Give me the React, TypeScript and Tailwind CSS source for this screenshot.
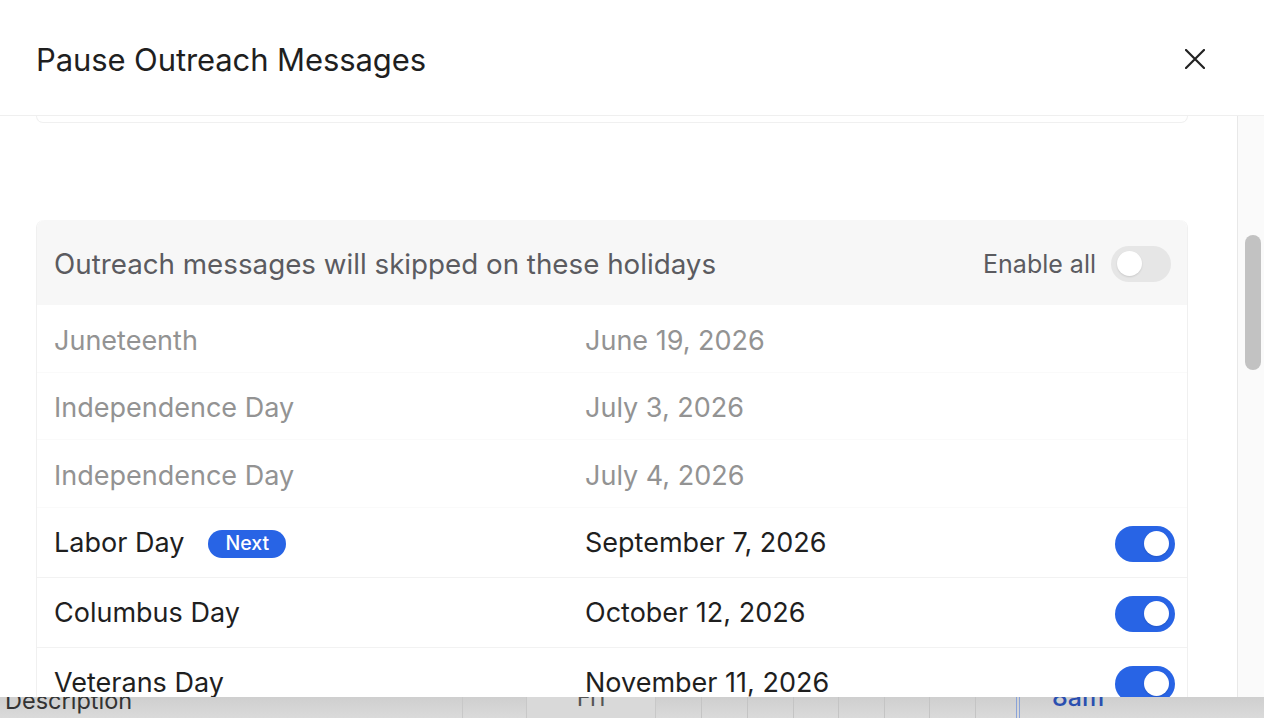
type Holiday = { name: string; date: string; enabled: boolean; next?: boolean };

const holidays: Holiday[] = [
  { name: "Juneteenth", date: "June 19, 2026", enabled: false },
  { name: "Independence Day", date: "July 3, 2026", enabled: false },
  { name: "Independence Day", date: "July 4, 2026", enabled: false },
  { name: "Labor Day", date: "September 7, 2026", enabled: true, next: true },
  { name: "Columbus Day", date: "October 12, 2026", enabled: true },
  { name: "Veterans Day", date: "November 11, 2026", enabled: true },
];

function Toggle({ on }: { on: boolean }) {
  return (
    <div
      className={
        on
          ? "flex h-[36px] w-[60px] items-center justify-end rounded-full bg-[#2864e5] px-[6px]"
          : "flex h-[36px] w-[60px] items-center justify-start rounded-full bg-[#e6e6e6] px-[6px]"
      }
    >
      <div className="h-[25px] w-[25px] rounded-full bg-white shadow-[0_1px_2px_rgba(0,0,0,0.12)]" />
    </div>
  );
}

export default function App() {
  return (
    <div
      className="flex h-[718px] w-[1264px] flex-col overflow-hidden bg-white"
      style={{ fontFamily: "Inter, 'Noto Sans', sans-serif" }}
    >
      {/* Header */}
      <div className="flex h-[116px] shrink-0 items-center justify-between border-b border-[#efefef] pl-[36px] pr-[59px]">
        <h1 className="pt-[5px] text-[31px] font-normal tracking-[-0.1px] text-[#1f1f1f]">Pause Outreach Messages</h1>
        <svg width="20" height="20" viewBox="0 0 20 20" className="mt-[2px]">
          <path d="M1 1L19 19M19 1L1 19" stroke="#222" strokeWidth="2.2" strokeLinecap="round" />
        </svg>
      </div>

      {/* Body */}
      <div className="flex min-h-0 flex-1">
        <div className="min-w-0 flex-1 overflow-hidden">
          {/* tail of the previous card */}
          <div className="ml-[36px] mr-[49px] h-[7px] rounded-b-lg border-x border-b border-[#f0f0f0]" />

          {/* Holidays card */}
          <div className="ml-[36px] mr-[49px] mt-[97px] rounded-t-lg border-x border-[#f0f0f0]">
            <div className="flex h-[85px] items-center justify-between rounded-t-lg bg-[#f7f7f7] pl-[17px] pr-[16px] pt-[2px]">
              <span className="pt-[2px] text-[27.75px] text-[#5b5b60]">Outreach messages will skipped on these holidays</span>
              <div className="flex items-center gap-[15px]">
                <span className="pt-[2px] text-[25px] text-[#5b5b60]">Enable all</span>
                <Toggle on={false} />
              </div>
            </div>

            {holidays.map((h, i) => (
              <div
                key={i}
                className={
                  h.enabled
                    ? "grid h-[70px] grid-cols-[531px_1fr_auto] items-center border-b border-[#f2f2f2] pl-[17px] pr-[12px] pt-[3px]"
                    : "grid h-[67.5px] grid-cols-[531px_1fr_auto] items-center border-b border-[#fafafa] pl-[17px] pr-[12px] pt-[5px]"
                }
              >
                <div className="flex items-center gap-[24px]">
                  <span className={h.enabled ? "text-[27px] text-[#1f1f1f]" : "text-[27px] text-[#939393]"}>
                    {h.name}
                  </span>
                  {h.next && (
                    <span className="flex h-[28px] w-[78px] items-center justify-center rounded-full bg-[#2864e5] text-[19.5px] font-medium text-white">
                      Next
                    </span>
                  )}
                </div>
                <span className={h.enabled ? "text-[27px] text-[#1f1f1f]" : "text-[27px] text-[#939393]"}>{h.date}</span>
                {h.enabled ? <Toggle on /> : <span />}
              </div>
            ))}
          </div>
        </div>

        {/* Scrollbar */}
        <div className="w-[27px] shrink-0 border-l border-[#e8e8e8] bg-[#fafafa] pl-[7px] pt-[119px]">
          <div className="h-[135px] w-[16px] rounded-full bg-[#c2c2c2]" />
        </div>
      </div>

      {/* Page behind the modal */}
      <div className="flex h-[21px] shrink-0 overflow-hidden bg-gradient-to-b from-[#cfcfcf] to-[#dadada] leading-[25px]">
        <div className="-mt-[9px] w-[462px] pl-[5px] text-[23.5px] text-[#333]">Description</div>
        <div className="w-[64px] border-l border-[#c8c8c8]" />
        <div className="-mt-[12px] flex w-[130px] justify-center border-x border-[#c8c8c8] bg-[#d9d9d9] text-[24px] text-[#555]">Fri</div>
        <div className="w-[46px] border-r border-[#c4c4c4]" />
        <div className="w-[46px] border-r border-[#c4c4c4]" />
        <div className="w-[46px] border-r border-[#c4c4c4]" />
        <div className="w-[45px] border-r border-[#c4c4c4]" />
        <div className="w-[46px] border-r border-[#c4c4c4]" />
        <div className="w-[45px] border-r border-[#c4c4c4]" />
        <div className="w-[46px] border-r border-[#c4c4c4]" />
        <div className="w-[44px] border-r-[4px] border-double border-[#8aa3d8]" />
        <div className="-mt-[12px] w-[240px] pl-[32px] text-[25px] font-medium text-[#2a4fb0]">8am</div>
      </div>
    </div>
  );
}
